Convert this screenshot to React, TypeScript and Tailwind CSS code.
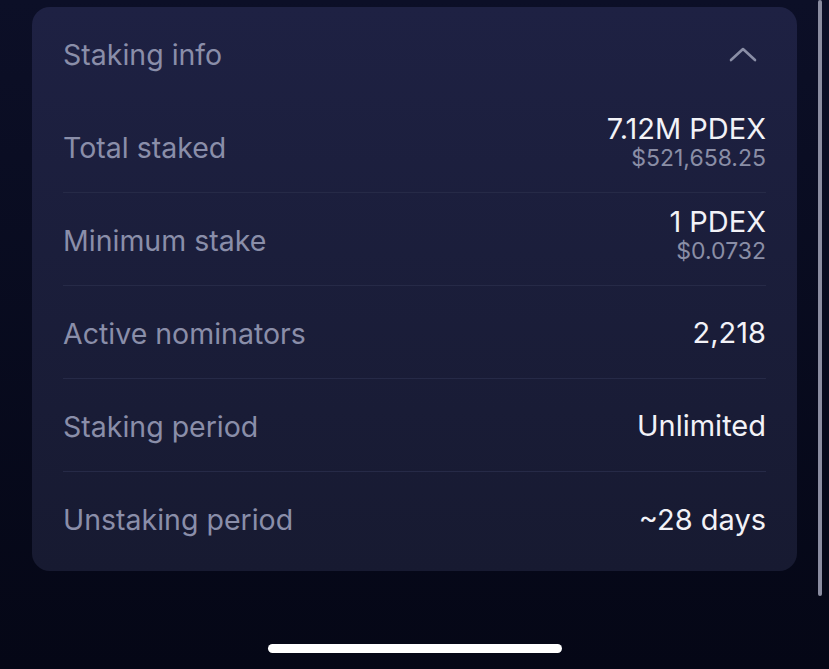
import React from "react";

const rows: { label: string; value: string; sub?: string }[] = [
  { label: "Total staked", value: "7.12M PDEX", sub: "$521,658.25" },
  { label: "Minimum stake", value: "1 PDEX", sub: "$0.0732" },
  { label: "Active nominators", value: "2,218" },
  { label: "Staking period", value: "Unlimited" },
  { label: "Unstaking period", value: "~28 days" },
];

export default function App() {
  return (
    <div
      className="relative w-[829px] h-[669px] overflow-hidden bg-gradient-to-b from-[#0c0f27] to-[#050716]"
      style={{ fontFamily: "Inter, 'Noto Sans', sans-serif" }}
    >
      <div className="pt-[7px] pl-[32px] pr-[32px] w-[829px]">
        <div className="w-[765px] h-[564px] rounded-[18px] bg-gradient-to-b from-[#1e2143] to-[#171a31] px-[31px] flex flex-col">
          <div className="h-[93px] flex items-center justify-between">
            <span className="text-[28.5px] text-[#8a8ea9] pt-[4px]">Staking info</span>
            <svg width="28" height="16" viewBox="0 0 28 16" className="mr-[9px]">
              <path d="M2 14 L14 3 L26 14" fill="none" stroke="#8a8ea6" strokeWidth="2.6" strokeLinecap="round" strokeLinejoin="round" />
            </svg>
          </div>
          {rows.map((r, i) => (
            <div
              key={r.label}
              className={`h-[93px] flex items-center justify-between ${i < rows.length - 1 ? "border-b border-[#262a47]" : ""}`}
            >
              <span className="text-[28.5px] text-[#8a8ea9] pt-[4px]">{r.label}</span>
              {r.sub ? (
                <div className="flex flex-col items-end mb-[8px]">
                  <span className="text-[29px] leading-[32px] text-[#f2f2f7]">{r.value}</span>
                  <span className="text-[23px] leading-[26px] text-[#8a8ea6]">{r.sub}</span>
                </div>
              ) : (
                <span className="text-[29px] leading-[32px] text-[#f2f2f7] pt-[2px]">{r.value}</span>
              )}
            </div>
          ))}
        </div>
      </div>
      <div className="absolute right-[7px] top-0 w-[4px] h-[596px] rounded-full bg-[#8a8ca0]" />
      <div className="absolute left-[268px] top-[644px] w-[294px] h-[9px] rounded-full bg-white" />
    </div>
  );
}
